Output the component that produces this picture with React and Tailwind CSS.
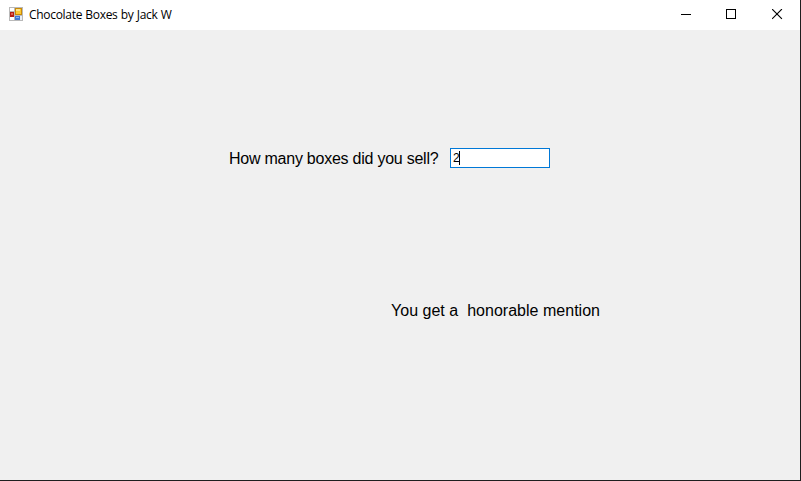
function FormIcon() {
  return (
    <svg width="14" height="14" viewBox="0 0 14 14" shapeRendering="crispEdges" className="block shrink-0">
      <rect width="14" height="14" fill="#b9b9b9" />
      <rect x="1" y="1" width="4" height="3" fill="#fff" />
      <rect x="1" y="10" width="4" height="3" fill="#fff" />
      <rect x="6" y="9" width="7" height="4" fill="#e9eef5" />
      <rect x="1" y="5" width="4" height="5" fill="#b51f14" />
      <rect x="2" y="6" width="2" height="2" fill="#e0604f" />
      <rect x="6" y="1" width="7" height="7" fill="#c98a08" />
      <rect x="7" y="2" width="5" height="5" fill="#fbc832" />
      <rect x="7" y="2" width="4" height="2" fill="#ffe388" />
      <rect x="6" y="9" width="5" height="4" fill="#3f78d4" />
      <rect x="7" y="10" width="3" height="1" fill="#86b2f2" />
    </svg>
  );
}

function WindowControls() {
  return (
    <div className="flex h-full items-start pt-[9px] pr-[17px]">
      <svg width="11" height="11" shapeRendering="crispEdges" className="mr-[34px] block">
        <rect y="5" width="10" height="1" fill="#000" />
      </svg>
      <svg width="11" height="11" shapeRendering="crispEdges" className="mr-[35px] block">
        <rect x="0.5" y="0.5" width="9" height="9" fill="none" stroke="#000" />
      </svg>
      <svg width="11" height="11" className="block">
        <path d="M0.1 0.1L9.9 9.9M9.9 0.1L0.1 9.9" stroke="#000" strokeWidth="1.15" />
      </svg>
    </div>
  );
}

export default function App() {
  return (
    <div className="flex h-[481px] w-[801px] flex-col overflow-hidden border-r border-b border-[#1e1e1e] bg-[#f0f0f0] text-black">
      <header className="flex h-[30px] shrink-0 items-start justify-between bg-white">
        <div className="flex pt-[7px] pl-[9px]">
          <FormIcon />
          <span className="ml-[6px] whitespace-nowrap font-['Open_Sans','Noto_Sans',sans-serif] text-[12px] leading-4 tracking-[-0.3px] [word-spacing:0.4px]">
            Chocolate Boxes by Jack W
          </span>
        </div>
        <WindowControls />
      </header>
      <main className="flex flex-col font-['Liberation_Sans',Arial,sans-serif] text-[16px] leading-5">
        <div className="mt-[118px] ml-[229px] flex h-5">
          <label htmlFor="boxes" className="w-[221px] pt-px tracking-[-0.24px] whitespace-pre">How many boxes did you sell?</label>
          <div id="boxes" className="flex h-5 w-[100px] items-start border border-[#0078d7] bg-white pt-[2px] pl-[2px]">
            <span className="w-[6px] text-[12px] leading-[15px]">2</span>
            <span className="h-[14px] w-px bg-black" />
          </div>
        </div>
        <p className="mt-[133px] ml-[391px] tracking-[0.02px] whitespace-pre">You get a  honorable mention</p>
      </main>
    </div>
  );
}
